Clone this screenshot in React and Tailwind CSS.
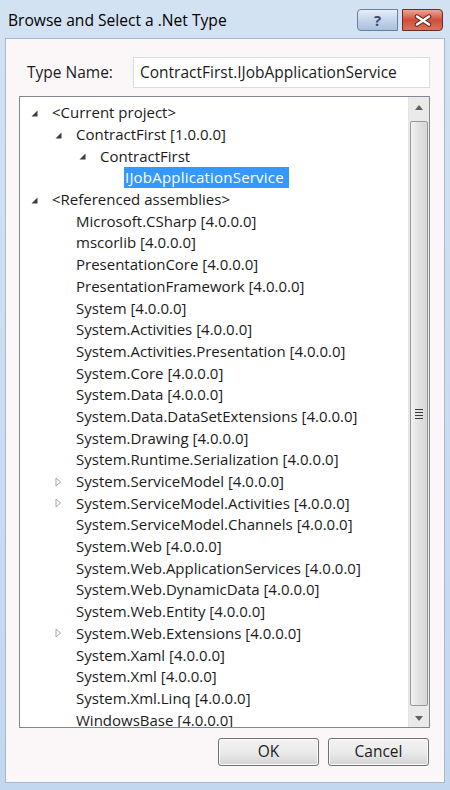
import React from 'react';

const font = { fontFamily: '"Open Sans", "Noto Sans", sans-serif' };

const indent = ['pl-[11px]', 'pl-[35px]', 'pl-[59px]', 'pl-[84px]'];

const rows = [
  { level: 0, text: '<Current project>', icon: 'open' },
  { level: 1, text: 'ContractFirst [1.0.0.0]', icon: 'open' },
  { level: 2, text: 'ContractFirst', icon: 'open' },
  { level: 3, text: 'IJobApplicationService', selected: true },
  { level: 0, text: '<Referenced assemblies>', icon: 'open' },
  { level: 1, text: 'Microsoft.CSharp [4.0.0.0]' },
  { level: 1, text: 'mscorlib [4.0.0.0]' },
  { level: 1, text: 'PresentationCore [4.0.0.0]' },
  { level: 1, text: 'PresentationFramework [4.0.0.0]' },
  { level: 1, text: 'System [4.0.0.0]' },
  { level: 1, text: 'System.Activities [4.0.0.0]' },
  { level: 1, text: 'System.Activities.Presentation [4.0.0.0]' },
  { level: 1, text: 'System.Core [4.0.0.0]' },
  { level: 1, text: 'System.Data [4.0.0.0]' },
  { level: 1, text: 'System.Data.DataSetExtensions [4.0.0.0]' },
  { level: 1, text: 'System.Drawing [4.0.0.0]' },
  { level: 1, text: 'System.Runtime.Serialization [4.0.0.0]' },
  { level: 1, text: 'System.ServiceModel [4.0.0.0]', icon: 'closed' },
  { level: 1, text: 'System.ServiceModel.Activities [4.0.0.0]', icon: 'closed' },
  { level: 1, text: 'System.ServiceModel.Channels [4.0.0.0]' },
  { level: 1, text: 'System.Web [4.0.0.0]' },
  { level: 1, text: 'System.Web.ApplicationServices [4.0.0.0]' },
  { level: 1, text: 'System.Web.DynamicData [4.0.0.0]' },
  { level: 1, text: 'System.Web.Entity [4.0.0.0]' },
  { level: 1, text: 'System.Web.Extensions [4.0.0.0]', icon: 'closed' },
  { level: 1, text: 'System.Xaml [4.0.0.0]' },
  { level: 1, text: 'System.Xml [4.0.0.0]' },
  { level: 1, text: 'System.Xml.Linq [4.0.0.0]' },
  { level: 1, text: 'WindowsBase [4.0.0.0]' },
];

const Expander = ({ icon }) => {
  if (icon === 'open')
    return (
      <svg width="7" height="7" viewBox="0 0 7 7" className="mt-[1px]">
        <polygon points="6.5,0.5 6.5,6.5 0.5,6.5" fill="#3c3c3c" />
      </svg>
    );
  if (icon === 'closed')
    return (
      <svg width="7" height="10" viewBox="0 0 7 10">
        <polygon points="1,1 5.5,5 1,9" fill="#fff" stroke="#a6a6a6" strokeWidth="1" />
      </svg>
    );
  return null;
};

const TreeRow = ({ row }) => (
  <div className={`flex items-center h-[21.7px] ${indent[row.level]}`}>
    <div className="w-[20px] flex items-center">
      <Expander icon={row.icon} />
    </div>
    <span
      className={`leading-[21px] whitespace-nowrap ${
        row.selected ? 'bg-[#3399ff] text-white pl-[1px] pr-[5px] tracking-[0.2px]' : 'px-[1px] text-[#1b1b1b]'
      }`}
    >
      {row.text}
    </span>
  </div>
);

const Scrollbar = () => (
  <div className="w-[21px] h-full bg-[#eaeaea] border-l border-[#e4e4e4] flex flex-col">
    <div className="h-[21px] flex items-center justify-center">
      <svg width="8" height="5" viewBox="0 0 8 5">
        <polygon points="4,0 8,5 0,5" fill="#606060" />
      </svg>
    </div>
    <div className="flex-1 mx-[1px] mt-[3px] mb-[3px] rounded-[2px] border border-[#979797] bg-gradient-to-r from-[#f3f3f3] via-[#e2e2e2] to-[#d6d6d6] flex items-center justify-center">
      <div className="flex flex-col gap-[2px]">
        <div className="w-[8px] h-[1px] bg-[#3c3c3c]" />
        <div className="w-[8px] h-[1px] bg-[#3c3c3c]" />
        <div className="w-[8px] h-[1px] bg-[#3c3c3c]" />
        <div className="w-[8px] h-[1px] bg-[#3c3c3c]" />
      </div>
    </div>
    <div className="h-[18px] flex items-center justify-center">
      <svg width="8" height="5" viewBox="0 0 8 5">
        <polygon points="0,0 8,0 4,5" fill="#606060" />
      </svg>
    </div>
  </div>
);

const DialogButton = ({ children }) => (
  <button className="w-[101px] h-[28px] rounded-[3px] border border-[#707070] bg-gradient-to-b from-[#f2f2f2] via-[#ebebeb] to-[#d4d4d4] text-[15.5px] text-[#1b1b1b] shadow-[inset_0_0_0_1px_#fcfcfc]">
    {children}
  </button>
);

export default function App() {
  return (
    <div
      style={font}
      className="w-[450px] h-[790px] bg-gradient-to-b from-[#d3e2f3] to-[#c3d7ee] flex flex-col overflow-hidden"
    >
      {/* Title bar */}
      <div className="h-[38px] flex items-center pl-[8px] pr-[7px] shrink-0">
        <span className="text-[15.6px] text-black pt-[3px]">Browse and Select a .Net Type</span>
        <div className="ml-auto flex self-start mt-[9px]">
          <div className="w-[41px] h-[22px] rounded-l-[4px] border border-[#6b7f99] bg-gradient-to-b from-[#e6eef8] via-[#c5d5ea] to-[#a9c0de] flex items-center justify-center text-[15px] font-bold text-[#3a4c66]">
            ?
          </div>
          <div className="w-[41px] h-[22px] ml-[4px] rounded-r-[4px] border border-[#6b2b24] bg-gradient-to-b from-[#e9a597] via-[#cf4c3a] to-[#d9735e] flex items-center justify-center">
            <svg width="20" height="13" viewBox="0 0 20 13">
              <path d="M4 2.5 L16 10.5 M16 2.5 L4 10.5" stroke="#5a1f18" strokeWidth="4.5" strokeLinecap="round" />
              <path d="M4 2.5 L16 10.5 M16 2.5 L4 10.5" stroke="#ffffff" strokeWidth="2.6" strokeLinecap="round" />
            </svg>
          </div>
        </div>
      </div>

      {/* Client area */}
      <div className="flex-1 mx-[5px] mb-[7px] bg-[#fbf7f9] border border-[#a6b9d0] flex flex-col">
        <div className="flex items-center pt-[18px] pl-[21px] pr-[14px]">
          <span className="w-[106px] text-[15.5px] text-[#1b1b1b]">Type Name:</span>
          <div className="flex-1 h-[31px] border border-[#dcdcdc] bg-white flex items-center px-[6px] text-[15.5px] text-[#1b1b1b]">
            ContractFirst.IJobApplicationService
          </div>
        </div>

        <div className="mt-[8px] ml-[13px] mr-[14px] h-[632px] border border-[#828790] bg-white flex text-[15px]">
          <div className="flex-1 pt-[5px] overflow-hidden">
            {rows.map((r, i) => (
              <TreeRow key={i} row={r} />
            ))}
          </div>
          <Scrollbar />
        </div>

        <div className="flex justify-end gap-[9px] mt-[10px] mr-[15px]">
          <DialogButton>OK</DialogButton>
          <DialogButton>Cancel</DialogButton>
        </div>
      </div>
    </div>
  );
}
